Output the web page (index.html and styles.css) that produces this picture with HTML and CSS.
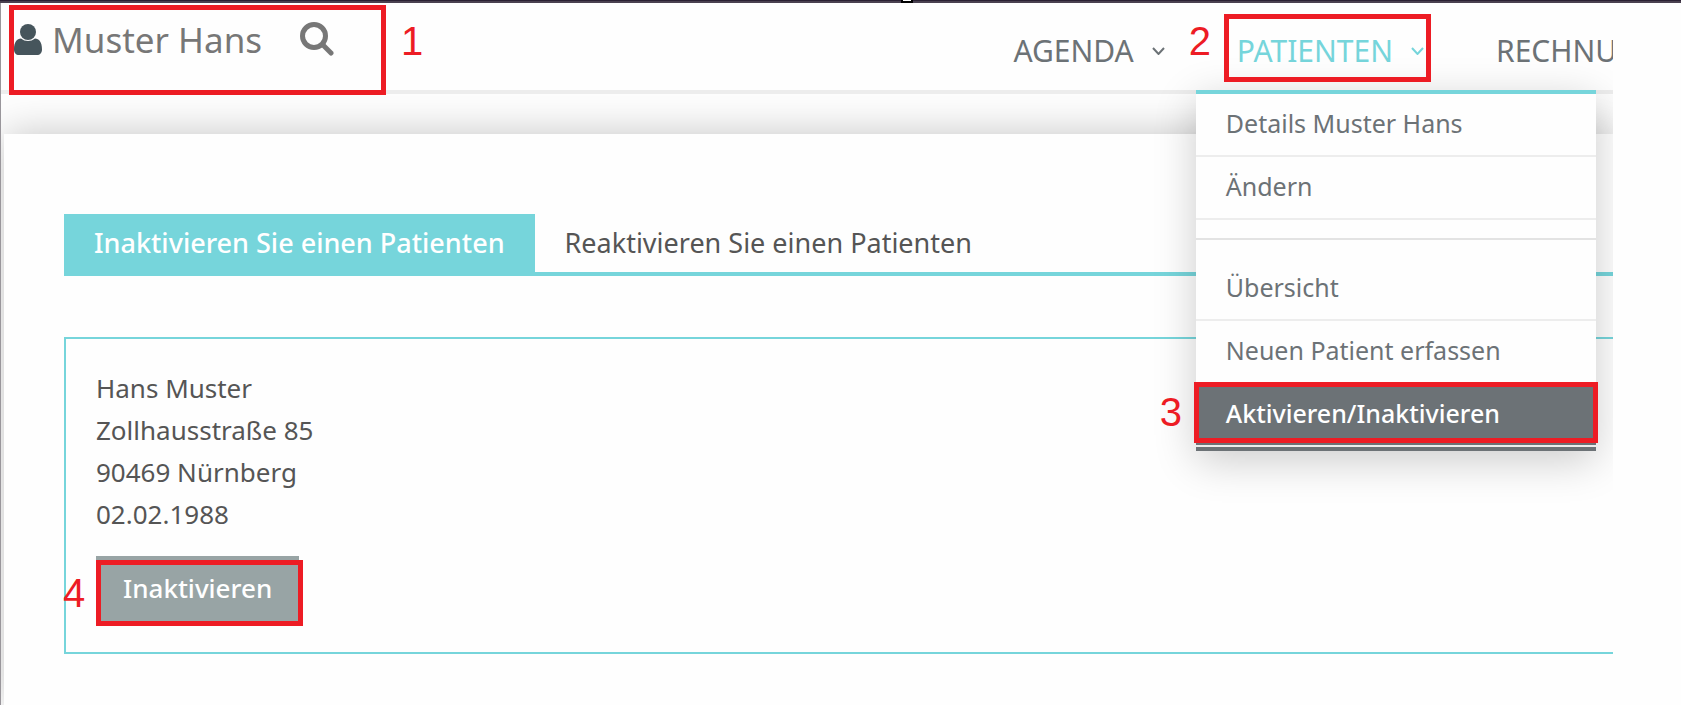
FILE: index.html
```html
<!DOCTYPE html>
<html lang="de">
<head>
    <meta charset="UTF-8">
    <title>Patienten - Aktivieren/Inaktivieren</title>
    <link rel="stylesheet" href="styles.css">
</head>
<body>
    <div class="topbar"><span class="notch"></span></div>
    <div class="page">
        <header class="header">
            <div class="current-patient">
                <svg class="icon-user" viewBox="0 0 28 31" aria-hidden="true">
                    <path d="M7 14.500C3 14.500 0 18 0 25.500C0 29 2 31 5 31H23C26 31 28 29 28 25.500C28 18 25 14.500 21 14.500C19 16.200 16.500 17 14 17C11.500 17 9 16.200 7 14.500Z"/>
                    <circle cx="14" cy="8" r="8"/>
                </svg>
                <span class="current-name">Muster Hans</span>
                <button class="search-button" aria-label="Patient suchen">
                    <svg viewBox="0 0 34 34" aria-hidden="true">
                        <circle cx="14" cy="14" r="11.500"/>
                        <path d="M23 23L31 31"/>
                    </svg>
                </button>
                <span class="mark mark-patient"></span>
                <span class="step step-patient">1</span>
            </div>
            <nav class="nav">
                <div class="nav-item">
                    <a href="#">AGENDA</a>
                    <svg class="chevron" viewBox="0 0 13 8" aria-hidden="true"><path d="M1 1L6.500 7L12 1"/></svg>
                </div>
                <div class="nav-item active">
                    <a href="#">PATIENTEN</a>
                    <svg class="chevron" viewBox="0 0 13 8" aria-hidden="true"><path d="M1 1L6.500 7L12 1"/></svg>
                    <ul class="dropdown">
                        <li><a href="#">Details Muster Hans</a></li>
                        <li><a href="#">Ändern</a></li>
                        <li class="divider"></li>
                        <li><a href="#">Übersicht</a></li>
                        <li><a href="#">Neuen Patient erfassen</a></li>
                        <li class="selected">
                            <a href="#">Aktivieren/Inaktivieren</a>
                            <span class="mark mark-entry"></span>
                            <span class="step step-entry">3</span>
                        </li>
                    </ul>
                    <span class="mark mark-menu"></span>
                    <span class="step step-menu">2</span>
                </div>
                <div class="nav-item cut">
                    <a href="#">RECHNU</a>
                </div>
            </nav>
        </header>

        <main class="panel">
            <div class="tabs">
                <a class="tab current" href="#">Inaktivieren Sie einen Patienten</a>
                <a class="tab" href="#">Reaktivieren Sie einen Patienten</a>
            </div>
            <section class="card">
                <address>
                    Hans Muster<br>
                    Zollhausstraße 85<br>
                    90469 Nürnberg<br>
                    02.02.1988
                </address>
                <div class="action">
                    <button class="deactivate">Inaktivieren</button>
                    <span class="mark mark-action"></span>
                    <span class="step step-action">4</span>
                </div>
            </section>
        </main>
    </div>
</body>
</html>
```

FILE: styles.css
```css
* {
    box-sizing: border-box;
}
body {
    margin: 0;
    background-color: #fefefe;
    font-family: "Noto Sans", sans-serif;
    font-size: 26px;
    color: #555555;
}
a {
    color: inherit;
    text-decoration: none;
}
button {
    border: none;
    padding: 0;
    font-family: inherit;
    cursor: pointer;
}
.topbar {
    display: flex;
    justify-content: center;
    height: 3px;
    padding-left: 133px;
    background-color: #4a4150;
    border-top: 1px solid #2b2133;
}
.notch {
    width: 12px;
    height: 3px;
    margin-top: -1px;
    background-color: #ffffff;
    border: 2px solid #000000;
    border-top: none;
}
.page {
    min-height: calc(100vh - 3px);
    margin-right: 68px;
    border-left: 1px solid #99969b;
    overflow: hidden;
    display: flex;
    flex-direction: column;
}

/* header */
.header {
    position: relative;
    z-index: 1;
    display: flex;
    justify-content: space-between;
    height: 91px;
    border-bottom: 4px solid #ededed;
}
.current-patient {
    position: relative;
    display: flex;
    align-items: center;
    height: 72px;
    padding-left: 13px;
}
.icon-user {
    width: 28px;
    height: 31px;
    fill: #46555c;
}
.current-name {
    margin-left: 10px;
    font-size: 35px;
    color: #777777;
}
.search-button {
    width: 34px;
    height: 34px;
    margin-left: 38px;
    background: none;
}
.search-button svg {
    display: block;
    fill: none;
    stroke: #777777;
    stroke-width: 5;
    stroke-linecap: round;
}
.nav {
    display: flex;
    font-size: 30px;
    color: #6c7276;
}
.nav-item {
    position: relative;
    display: flex;
    align-items: center;
    gap: 18px;
    height: 95px;
    margin-right: 72px;
}
.nav-item.active {
    color: #76d5db;
}
.nav-item.cut {
    width: 117px;
    margin-right: 0;
    overflow: hidden;
}
.chevron {
    width: 13px;
    height: 8px;
    fill: none;
    stroke: currentColor;
    stroke-width: 2;
}

/* dropdown */
.dropdown {
    position: absolute;
    top: 87px;
    left: -41px;
    width: 400px;
    margin: 0;
    padding: 0;
    list-style: none;
    background-color: #fefefe;
    border-top: 4px solid #76d5db;
    border-bottom: 4px solid #6c7276;
    box-shadow: 0 10px 40px rgba(0, 0, 0, 0.2);
    font-size: 25px;
    color: #6c7276;
}
.dropdown li {
    position: relative;
    border-bottom: 2px solid #ededed;
}
.dropdown li a {
    display: block;
    padding: 0 30px 2px;
    line-height: 59px;
}
.dropdown .divider {
    height: 20px;
    margin-bottom: 18px;
    border-color: #e3e3e3;
}
.dropdown .selected {
    background-color: #6c7276;
    font-weight: 500;
    color: #ffffff;
}

/* content */
.panel {
    flex: 1;
    margin: 40px 0 0 3px;
    padding: 80px 0 48px 60px;
    background-color: #fefefe;
    box-shadow: 0 0 40px rgba(0, 0, 0, 0.23);
}
.tabs {
    display: flex;
    border-bottom: 4px solid #76d5db;
    font-size: 27px;
}
.tab {
    padding: 0 30px;
    line-height: 58px;
}
.tab.current {
    background-color: #76d5db;
    font-weight: 500;
    color: #ffffff;
}
.card {
    margin-top: 61px;
    padding: 28px 30px 30px;
    border: 2px solid #76d5db;
    border-right: none;
}
address {
    font-style: normal;
    line-height: 42px;
}
.action {
    position: relative;
    display: flex;
    margin-top: 21px;
}
.deactivate {
    height: 66px;
    padding: 0 27px 2px;
    background-color: #98a4a5;
    font-size: 26px;
    font-weight: 500;
    color: #ffffff;
}

/* numbered red markers */
.mark {
    position: absolute;
    border: 5px solid #ed1c24;
    pointer-events: none;
}
.mark-patient {
    top: 2px;
    left: 8px;
    width: 377px;
    height: 90px;
}
.mark-menu {
    top: 11px;
    left: -13px;
    right: -7px;
    height: 68px;
}
.mark-entry {
    top: -2px;
    left: -2px;
    right: -2px;
    height: 61px;
}
.mark-action {
    top: 4px;
    left: 0;
    width: 207px;
    height: 66px;
}
.step {
    position: absolute;
    font-family: "Liberation Sans", Arial, sans-serif;
    font-size: 40px;
    font-weight: 400;
    line-height: 40px;
    color: #ed1c24;
}
.step-patient {
    top: 18px;
    left: 400px;
}
.step-menu {
    top: 18px;
    left: -48px;
}
.step-entry {
    top: 8px;
    left: -36px;
}
.step-action {
    top: 17px;
    left: -33px;
}
```
